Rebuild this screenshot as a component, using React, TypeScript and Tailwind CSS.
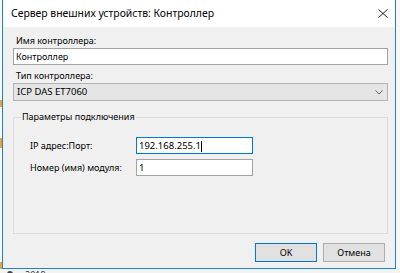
import React from 'react'

export default function App() {
  return (
    <div className="w-[400px] h-[273px] overflow-hidden bg-[#f3f3f3] flex flex-col font-['Noto_Sans',sans-serif] text-[9px] text-black">
      <div className="flex h-[269px]">
        {/* край соседнего окна слева */}
        <div className="w-[2px] flex flex-col bg-[#f7f7f7]">
          <div className="h-[100px]" />
          <div className="h-[7px] bg-[#e8a33c]" />
          <div className="h-[31px]" />
          <div className="h-[10px] bg-[#e8a33c]" />
          <div className="h-[114px]" />
          <div className="h-[7px] bg-[#e8a33c]" />
        </div>

        <div className="w-[394px] h-[269px] border-x border-b border-[#1883d7] bg-[#f0f0f0] flex flex-col">
          <div className="h-[27px] bg-white flex items-center justify-between pl-[8px] pr-[7px]">
            <span className="text-[10.4px]">Сервер внешних устройств: Контроллер</span>
            <svg width="10" height="9" viewBox="0 0 10 9">
              <path d="M0.5 0.5 L9.5 8.5 M9.5 0.5 L0.5 8.5" stroke="#222" strokeWidth="1" fill="none" />
            </svg>
          </div>

          <div className="flex flex-col pl-[10px] pr-[7px] pt-[7px]">
            <div className="h-[14px] leading-[14px] pl-[3px]">Имя контроллера:</div>
            <div className="h-[17px] border border-[#a3a3a3] bg-white leading-[15px] pl-[2px]">Контроллер</div>

            <div className="mt-[4px] h-[14px] leading-[14px] pl-[3px]">Тип контроллера:</div>
            <div className="h-[18px] border border-[#b4b4b4] bg-[#e5e5e5] flex items-center justify-between pl-[3px] pr-[4px]">
              <span className="text-[9.5px]">ICP DAS ET7060</span>
              <svg width="8" height="5" viewBox="0 0 8 5">
                <path d="M0.5 0.5 L4 4 L7.5 0.5" stroke="#606060" strokeWidth="1" fill="none" />
              </svg>
            </div>

            <div className="relative mt-[16px] h-[117px] border border-[#dcdcdc] pt-[19px] pl-[16px]">
              <span className="absolute -top-[8px] left-[7px] px-[1px] bg-[#f0f0f0] leading-[14px]">Параметры подключения</span>
              <div className="flex items-center h-[17px]">
                <span className="w-[106px]">IP адрес:Порт:</span>
                <div className="w-[117px] h-[17px] border border-[#0078d7] bg-white leading-[15px] pl-[2px] text-[9.5px]">
                  192.168.255.1<span className="inline-block w-px h-[11px] bg-black align-middle" />
                </div>
              </div>
              <div className="flex items-center h-[17px] mt-[5px]">
                <span className="w-[106px]">Номер (имя) модуля:</span>
                <div className="w-[117px] h-[17px] border border-[#a3a3a3] bg-white leading-[15px] pl-[2px] text-[9.5px]">1</div>
              </div>
            </div>

            <div className="flex justify-end gap-[6px] mt-[9px] pr-[3px]">
              <button className="w-[62px] h-[19px] border border-[#0078d7] bg-[#e1e1e1] leading-[17px]">OK</button>
              <button className="w-[62px] h-[19px] border border-[#adadad] bg-[#e1e1e1] leading-[17px]">Отмена</button>
            </div>
          </div>
        </div>

        <div className="flex-1 bg-[#f7f7f7]" />
      </div>

      <div className="h-[4px] overflow-hidden flex items-start pl-[7px] gap-[12px] text-[#333]">
        <div className="w-[6px] h-[6px] mt-[2px] rounded-full bg-[#444]" />
        <span className="text-[9px] leading-[9px] mt-[1px]">2019</span>
      </div>
    </div>
  )
}
